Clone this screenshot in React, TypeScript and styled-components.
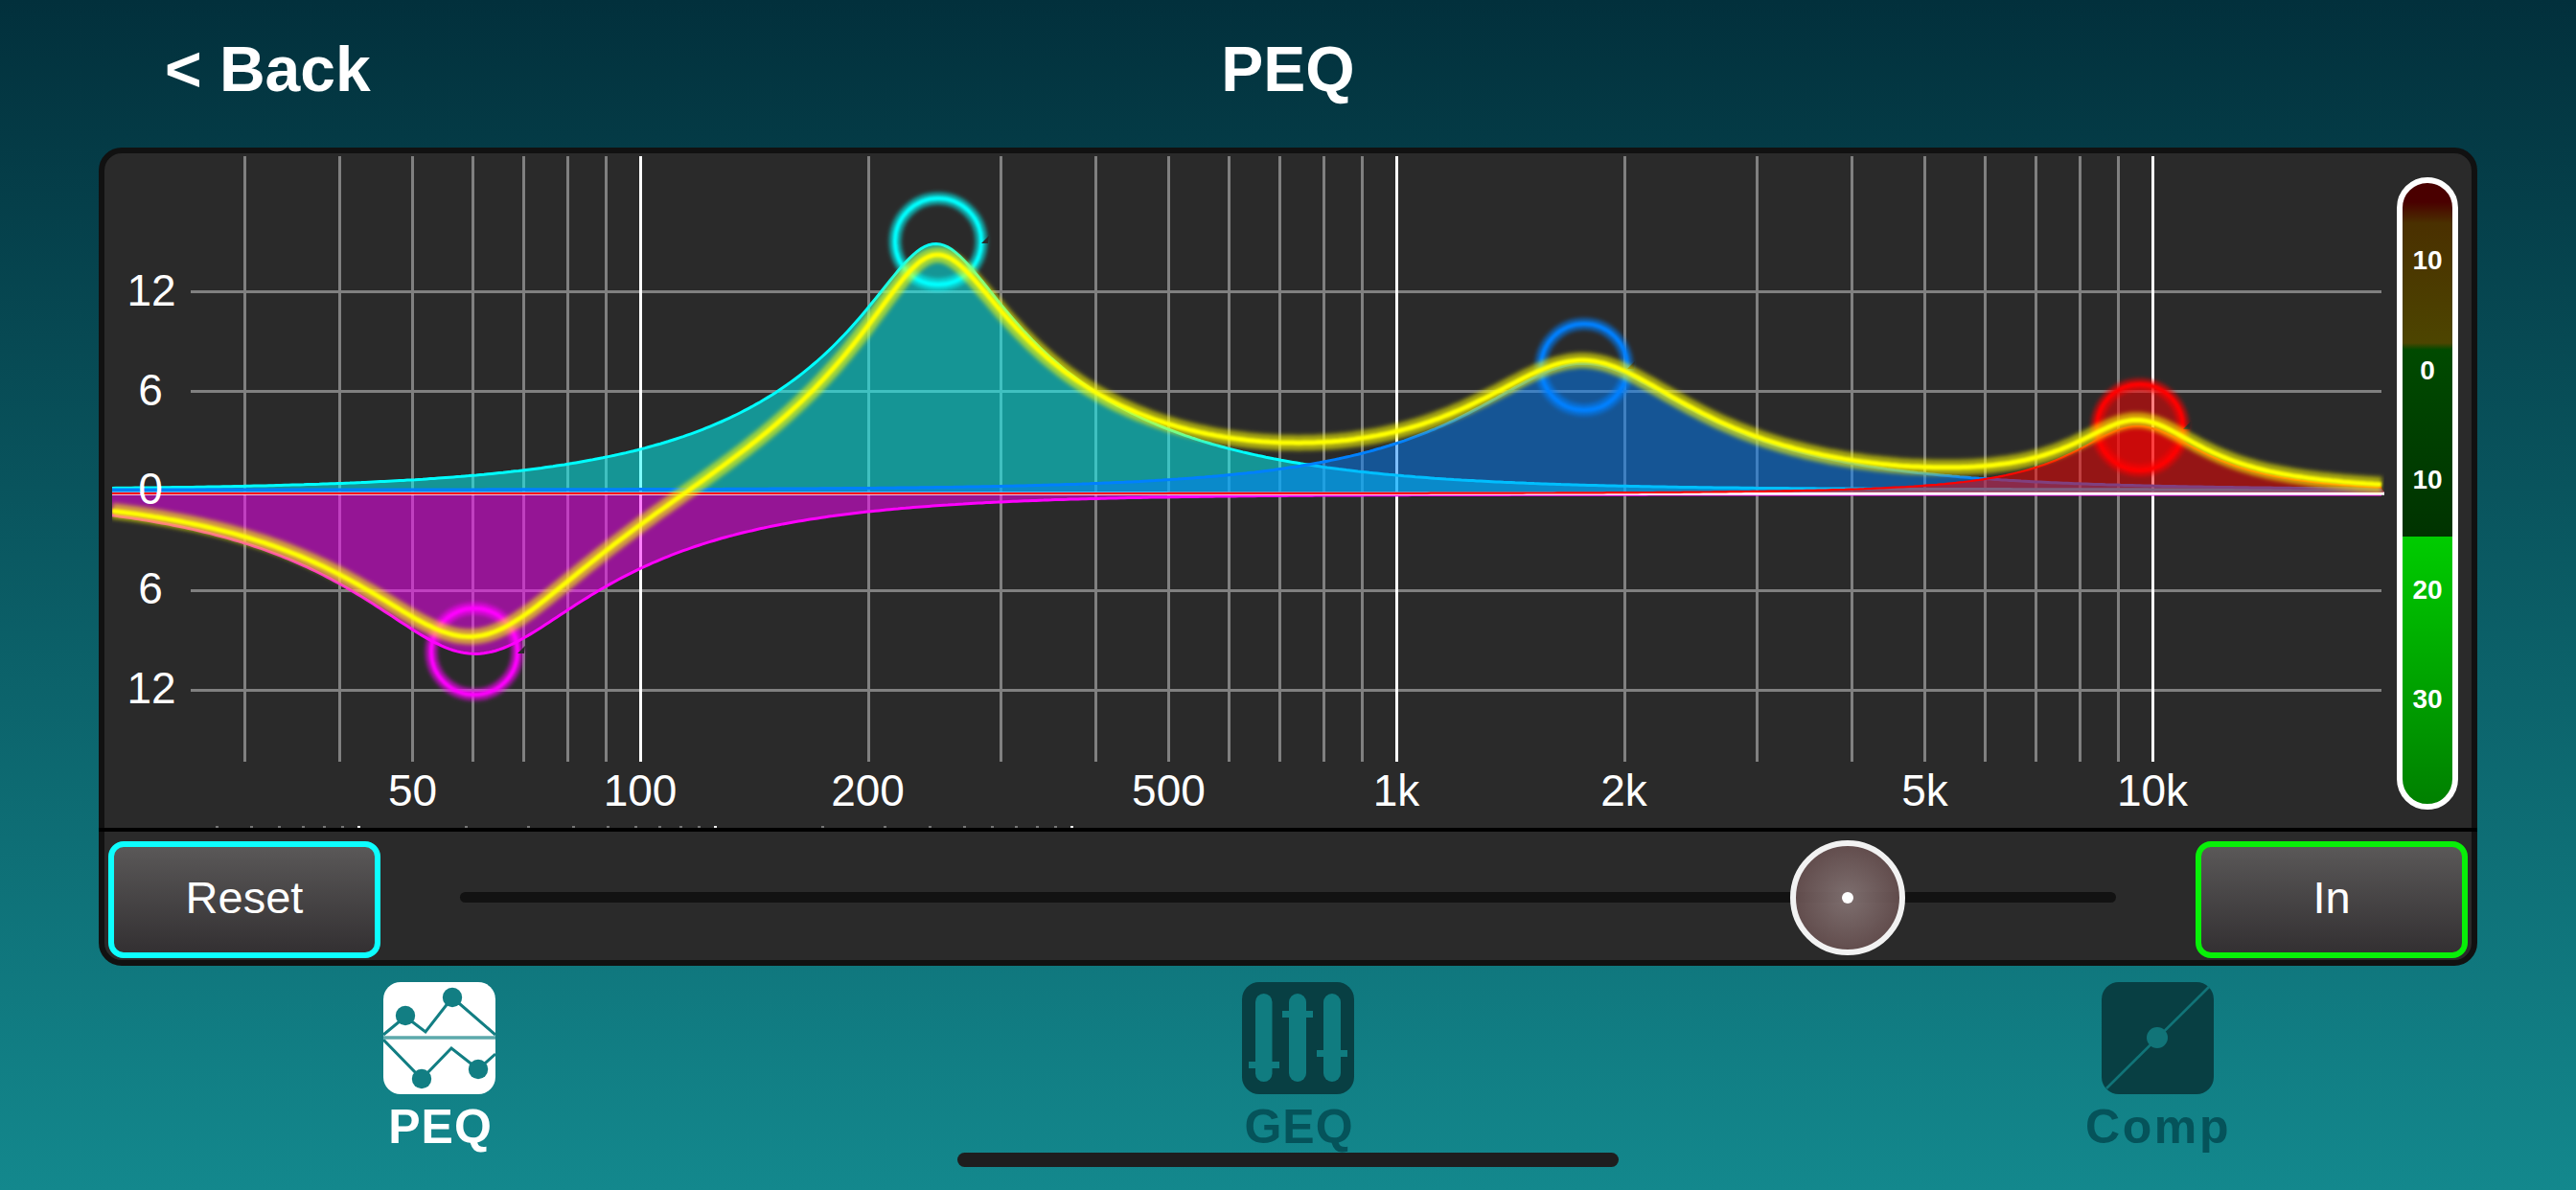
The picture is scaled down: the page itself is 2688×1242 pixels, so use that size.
import React from "react";
import styled, { createGlobalStyle } from "styled-components";

const Global = createGlobalStyle`
  html, body { margin: 0; padding: 0; width: 2688px; height: 1242px; overflow: hidden; }
  body { font-family: "Liberation Sans", Arial, sans-serif; }
`;

const Screen = styled.div`
  position: relative;
  width: 2688px;
  height: 1242px;
  overflow: hidden;
  display: flex;
  flex-direction: column;
  background: linear-gradient(180deg, #02303c 0%, #13888d 100%);
`;

const Header = styled.header`
  height: 144px;
  margin-bottom: 10px;
  flex: none;
  display: grid;
  grid-template-columns: 1fr auto 1fr;
  align-items: center;
  padding: 0 0 0 172px;
  margin-right: 172px;
`;

const HeaderText = styled.div`
  font-size: 66px;
  font-weight: 700;
  color: #fff;
  white-space: nowrap;
`;

const Panel = styled.main`
  box-sizing: border-box;
  width: 2482px;
  height: 854px;
  margin-left: 103px;
  flex: none;
  border: 6px solid #111;
  border-radius: 24px;
  background: #2a2a2a;
  display: flex;
  flex-direction: column;
`;

const ChartRow = styled.section`
  height: 704px;
  display: flex;
  align-items: flex-start;
  flex: none;
`;

const ChartSvg = styled.svg`
  width: 2385px;
  height: 704px;
  flex: none;
  display: block;
`;

const AxisText = styled.text`
  font-family: "Liberation Sans", Arial, sans-serif;
  font-size: 46px;
  fill: #fff;
  text-anchor: middle;
`;

const Meter = styled.div`
  box-sizing: border-box;
  width: 64px;
  height: 660px;
  margin: 25px 0 0 7px;
  flex: none;
  border: 6px solid #fff;
  border-radius: 32px;
  overflow: hidden;
  padding-top: 24px;
  background: linear-gradient(
    180deg,
    #4a0000 0,
    #4a0000 20px,
    #4a3000 42px,
    #4d4500 167px,
    #004a00 174px,
    #003300 369px,
    #00cc00 369px,
    #008000 648px
  );
`;

const MeterLabel = styled.div`
  height: 114.5px;
  display: flex;
  align-items: center;
  justify-content: center;
  font-size: 28px;
  font-weight: 700;
  color: #fff;
`;

const Controls = styled.section`
  margin: 0 -6px;
  padding: 10px 10px 0;
  border-top: 4px solid #000;
  display: flex;
  align-items: flex-start;
  flex: 1;
`;

const PanelButton = styled.button<{ $ring: string }>`
  box-sizing: border-box;
  width: 284px;
  height: 122px;
  flex: none;
  border: 6px solid ${(p) => p.$ring};
  border-radius: 16px;
  background: linear-gradient(180deg, #5a5858 0%, #333032 100%);
  color: #fff;
  font-family: "Liberation Sans", Arial, sans-serif;
  font-size: 47px;
  padding: 0 0 5px;
`;

const Slider = styled.div`
  position: relative;
  flex: 1;
  height: 11px;
  margin: 53px 83px 0;
  border-radius: 6px;
  background: #121212;
`;

const Knob = styled.div`
  position: absolute;
  box-sizing: border-box;
  left: 1388px;
  top: -54px;
  width: 120px;
  height: 120px;
  border: 6px solid #f2f2f2;
  border-radius: 50%;
  background: radial-gradient(circle, rgba(132, 116, 116, 0.93) 0%, rgba(92, 66, 66, 0.9) 100%);
  display: flex;
  align-items: center;
  justify-content: center;
  &::after {
    content: "";
    width: 12px;
    height: 12px;
    border-radius: 50%;
    background: #fff;
  }
`;

const TabBar = styled.nav`
  display: flex;
  justify-content: space-between;
  padding: 17px 357px 0 378px;
`;

const Tab = styled.div`
  width: 160px;
  display: flex;
  flex-direction: column;
  align-items: center;
`;

const TabIcon = styled.svg`
  width: 117px;
  height: 117px;
  display: block;
`;

const TabLabel = styled.div<{ $active?: boolean; $spacing?: number }>`
  margin: 9px 0 0 ${(p) => (p.$active ? 3 : 2)}px;
  font-size: 50px;
  line-height: 50px;
  font-weight: 700;
  letter-spacing: ${(p) => p.$spacing ?? 1}px;
  white-space: nowrap;
  color: ${(p) => (p.$active ? "#fff" : "#05535a")};
`;

const HomeBar = styled.div`
  position: absolute;
  left: 50%;
  bottom: 24px;
  width: 690px;
  height: 15px;
  margin-left: -345px;
  border-radius: 8px;
  background: #1e1e1e;
`;

/* --- chart maths, in page coordinates --- */
const X100 = 668;
const DECADE = 789;
const X_L = 117;
const X_R = 2488;
const DB = 104 / 6;

const fx = (x: number) => 100 * Math.pow(10, (x - X100) / DECADE);
const xf = (f: number) => X100 + DECADE * Math.log10(f / 100);
const crisp = (f: number) => Math.round(xf(f)) + 0.5;

type Band = { f: number; g: number; q: number; y0: number; sw: number; color: string; fill: string };

const response = (b: Band, f: number) => {
  const w = f / b.f;
  const A = Math.pow(10, b.g / 40);
  const d = (1 - w * w) ** 2;
  const num = d + ((w * A) / b.q) ** 2;
  const den = d + (w / (A * b.q)) ** 2;
  return 10 * Math.log10(num / den);
};

const cyanBand: Band = { f: 246, g: 14.8, q: 1.28, y0: 511, sw: 3, color: "#00ffff", fill: "rgba(0,255,255,0.5)" };
const magentaBand: Band = { f: 60.5, g: -9.6, q: 1.03, y0: 516, sw: 3, color: "#ff00ff", fill: "rgba(255,0,255,0.5)" };
const blueBand: Band = { f: 1770, g: 7.6, q: 1.11, y0: 511, sw: 3, color: "#0080ff", fill: "rgba(0,128,255,0.5)" };
const redBand: Band = { f: 9570, g: 4.05, q: 2, y0: 515, sw: 2.2, color: "#ff0000", fill: "rgba(255,0,0,0.5)" };
const bands = [cyanBand, magentaBand, blueBand, redBand];

const samples: number[] = [];
for (let x = X_L; x <= X_R; x += 4) samples.push(x);

const bandLine = (b: Band) =>
  samples.map((x, i) => `${i ? "L" : "M"}${x} ${(b.y0 - response(b, fx(x)) * DB).toFixed(1)}`).join(" ");

const sumLine = samples
  .map((x, i) => {
    const db = bands.reduce((acc, b) => acc + response(b, fx(x)), 0);
    return `${i ? "L" : "M"}${x} ${(513 - db * DB).toFixed(1)}`;
  })
  .join(" ");

const freqMinor = [30, 40, 50, 60, 70, 80, 90, 200, 300, 400, 500, 600, 700, 800, 900, 2000, 3000, 4000, 5000, 6000, 7000, 8000, 9000];
const freqMajor = [100, 1000, 10000];
const dbLines = [304.5, 408.5, 616.5, 720.5];

const freqLabels: [string, number][] = [
  ["50", 50],
  ["100", 100],
  ["200", 200],
  ["500", 500],
  ["1k", 1000],
  ["2k", 2000],
  ["5k", 5000],
  ["10k", 10000],
];

const dbLabels: [string, number, number][] = [
  ["12", 158, 319],
  ["6", 157, 423],
  ["0", 157, 526],
  ["6", 157, 630],
  ["12", 158, 734],
];

const rings = [
  { cx: 979, cy: 252, color: "#00ffff", fill: "none" },
  { cx: 495, cy: 680, color: "#ff00ff", fill: "none" },
  { cx: 1653, cy: 383, color: "#0080ff", fill: "none" },
  { cx: 2233, cy: 446, color: "#ff0000", fill: "rgba(255,0,0,0.5)" },
];

const stubMults = [0.4, 0.5, 0.6, 0.7, 0.8, 0.9, 1, 2, 3, 4, 5, 6, 7, 8, 9, 10, 20, 30, 40, 50, 60, 70, 80, 90, 100];

const BandShape = ({ b }: { b: Band }) => {
  const line = bandLine(b);
  return (
    <>
      <path d={`${line} L${X_R} 514 L${X_L} 514 Z`} fill={b.fill} />
      <path d={line} fill="none" stroke={b.color} strokeWidth={b.sw} />
    </>
  );
};

const Chart = () => (
  <ChartSvg viewBox="109 160 2385 704">
    <defs>
      <filter id="soft" filterUnits="userSpaceOnUse" x="100" y="150" width="2400" height="720">
        <feGaussianBlur stdDeviation="2" />
      </filter>
      <filter id="softer" filterUnits="userSpaceOnUse" x="100" y="150" width="2400" height="720">
        <feGaussianBlur stdDeviation="1" />
      </filter>
      <clipPath id="plot">
        <rect x={X_L} y="160" width={X_R - X_L} height="640" />
      </clipPath>
    </defs>

    {dbLines.map((y) => (
      <line key={y} x1="199" x2="2485" y1={y} y2={y} stroke="#808080" strokeWidth="3" />
    ))}
    {freqMinor.map((f) => (
      <line key={f} x1={crisp(f)} x2={crisp(f)} y1="163" y2="795" stroke="#808080" strokeWidth="3" />
    ))}
    {freqMajor.map((f) => (
      <line key={f} x1={crisp(f)} x2={crisp(f)} y1="163" y2="795" stroke="#fff" strokeWidth="3" />
    ))}
    {stubMults.map((m) => (
      <rect
        key={m}
        x={Math.round(374 + 372 * Math.log10(m)) - 1}
        y="862"
        width="3"
        height="2"
        fill={m === 1 || m === 10 || m === 100 ? "#eee" : "#777"}
      />
    ))}

    <g clipPath="url(#plot)">
      <BandShape b={cyanBand} />
      <BandShape b={magentaBand} />
      <line x1={X_L} x2={X_R} y1="515" y2="515" stroke="#fff" strokeWidth="3.4" />
      <BandShape b={blueBand} />
      <BandShape b={redBand} />
    </g>

    {rings.map((r) => (
      <g key={r.color}>
        <circle cx={r.cx} cy={r.cy} r="45" fill={r.fill} />
        <circle cx={r.cx} cy={r.cy} r="45" fill="none" stroke={r.color} strokeOpacity="0.65" strokeWidth="12" filter="url(#soft)" />
        <circle cx={r.cx} cy={r.cy} r="45" fill="none" stroke={r.color} strokeWidth="4" filter="url(#softer)" />
        <polygon
          points={`${r.cx + 45},${r.cy + 2} ${r.cx + 53},${r.cy - 6} ${r.cx + 52},${r.cy + 2}`}
          fill="#2a2a2a"
        />
      </g>
    ))}

    <g clipPath="url(#plot)">
      <path d={sumLine} fill="none" stroke="#ffff00" strokeOpacity="0.6" strokeWidth="16" filter="url(#soft)" />
      <path d={sumLine} fill="none" stroke="#ffff00" strokeWidth="5" filter="url(#softer)" />
    </g>

    {freqLabels.map(([t, f]) => (
      <AxisText key={t} x={xf(f)} y="841">
        {t}
      </AxisText>
    ))}
    {dbLabels.map(([t, x, y]) => (
      <AxisText key={y} x={x} y={y}>
        {t}
      </AxisText>
    ))}
  </ChartSvg>
);

const TEAL = "#127e83";
const DARK = "#083f43";
const GEQ_TEAL = "#107c80";

const PeqIcon = () => (
  <TabIcon viewBox="0 0 117 117">
    <rect width="117" height="117" rx="18" fill="#fff" />
    <g fill="none" stroke={TEAL} strokeWidth="3">
      <polyline points="0,55 23,36 44,52 72,16 117,55" />
      <polyline points="0,60 40,101 71,69 99,91 117,75" />
    </g>
    <line x1="0" x2="117" y1="58" y2="58" stroke="#5ca9ab" strokeWidth="3.5" />
    <g fill={TEAL}>
      <circle cx="23" cy="35" r="10.2" />
      <circle cx="72" cy="16" r="10.2" />
      <circle cx="40" cy="101" r="10.2" />
      <circle cx="99" cy="91" r="10.2" />
    </g>
  </TabIcon>
);

const GeqIcon = () => (
  <TabIcon viewBox="0 0 117 117">
    <rect width="117" height="117" rx="18" fill={DARK} />
    <g fill={GEQ_TEAL}>
      <rect x="14" y="12" width="17.5" height="92" rx="8.75" />
      <rect x="49" y="12" width="18" height="92" rx="9" />
      <rect x="85" y="12" width="18" height="92" rx="9" />
      <rect x="7" y="83" width="32" height="7" />
      <rect x="42" y="30" width="32" height="7" />
      <rect x="78" y="71" width="32" height="7" />
    </g>
  </TabIcon>
);

const CompIcon = () => (
  <TabIcon viewBox="0 0 117 117">
    <rect width="117" height="117" rx="18" fill={DARK} />
    <line x1="5" y1="111" x2="112" y2="5" stroke="#117478" strokeWidth="2.6" />
    <circle cx="58" cy="58" r="11" fill="#117478" />
  </TabIcon>
);

export default function App() {
  return (
    <Screen>
      <Global />
      <Header>
        <HeaderText>&lt; Back</HeaderText>
        <HeaderText>PEQ</HeaderText>
        <div />
      </Header>
      <Panel>
        <ChartRow>
          <Chart />
          <Meter>
            {["10", "0", "10", "20", "30"].map((t, i) => (
              <MeterLabel key={i}>{t}</MeterLabel>
            ))}
          </Meter>
        </ChartRow>
        <Controls>
          <PanelButton $ring="#0dffff">Reset</PanelButton>
          <Slider>
            <Knob />
          </Slider>
          <PanelButton $ring="#08f008">In</PanelButton>
        </Controls>
      </Panel>
      <TabBar>
        <Tab>
          <PeqIcon />
          <TabLabel $active>PEQ</TabLabel>
        </Tab>
        <Tab>
          <GeqIcon />
          <TabLabel>GEQ</TabLabel>
        </Tab>
        <Tab>
          <CompIcon />
          <TabLabel $spacing={2.6}>Comp</TabLabel>
        </Tab>
      </TabBar>
      <HomeBar />
    </Screen>
  );
}
